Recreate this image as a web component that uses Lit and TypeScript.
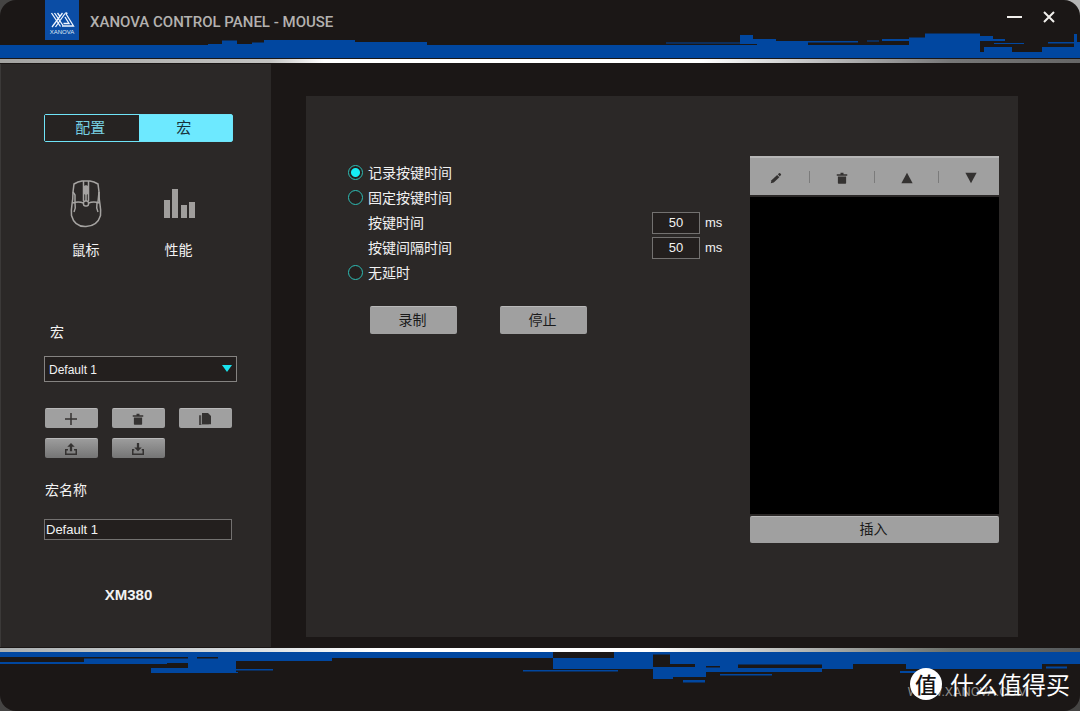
import { LitElement, html, css, svg } from "lit";
import { customElement, state } from "lit/decorators.js";

const trash = svg`<path d="M6 1h4v2h5v2H1V3h5z"/><path d="M2.500 6h11v8.500q0 1-1 1h-9q-1 0-1-1z"/>`;

const icons = {
  plus: svg`<path d="M7 0h2v7h7v2H9v7H7V9H0V7h7z"/>`,
  trash,
  copy: svg`<path d="M4 0h8l4 4v11H4z"/><path d="M0 3h3v12.500h10V16H0z" opacity=".8"/>`,
  upload: svg`<path d="M8 0l5 5H9.500v6h-3V5H3z"/><path d="M0 8h4v2H2v4h12v-4h-2V8h4v8H0z"/>`,
  download: svg`<path d="M6.500 0h3v6H13l-5 5-5-5h3.500z"/><path d="M0 8h3v2H2v4h12v-4h-1V8h3v8H0z"/>`,
  pencil: svg`<path d="M1 15l1-4 7.500-7 3 3L5 14z"/><path d="M10.500 3L12 1.500q.7-.6 1.400 0l1.200 1.200q.6.7 0 1.400L13 6z"/>`,
  up: svg`<path d="M8 1l7.500 14H.5z"/>`,
  down: svg`<path d="M8 15L.5 1h15z"/>`,
};

type IconName = keyof typeof icons;

const icon = (name: IconName) =>
  html`<svg class="icon" viewBox="0 0 16 16" aria-hidden="true">${icons[name]}</svg>`;

@customElement("app-root")
export class AppRoot extends LitElement {
  @state() private mode = "record";

  static styles = css`
    :host {
      display: block;
      min-height: 100vh;
      background: linear-gradient(to top right, #454443 70%, #b4b4b4 95%);
      color: #f2f2f2;
      font: 14px/20px "Liberation Sans", "Noto Sans CJK SC", sans-serif;
    }
    * { box-sizing: border-box; }
    button, input, select { font: inherit; color: inherit; margin: 0; }
    .window {
      display: flex;
      flex-direction: column;
      min-height: 100vh;
      background: #1b1716;
      border-radius: 16px;
      overflow: hidden;
    }
    .header {
      position: relative;
      display: flex;
      align-items: flex-start;
      height: 59px;
      padding: 0 20px 0 45px;
    }
    .deco { position: absolute; left: 0; width: 100%; fill: #0147a0; }
    .deco-top { bottom: 1px; height: 26px; }
    .deco-bottom { top: 0; height: 32px; }
    .logo { width: 34px; height: 40px; background: #0b4da5; flex: none; position: relative; }
    .logo svg { display: block; width: 34px; height: 28px; }
    .brand { font: 6px/8px "Liberation Sans", sans-serif; text-align: center; color: #dfe9f5; }
    .title {
      position: relative;
      flex: 1;
      margin: 0 0 0 11px;
      font: 500 15px/20px Roboto, sans-serif;
      color: #b3b1af;
      padding-top: 12px;
    }
    .controls { position: relative; display: flex; gap: 15px; padding-top: 7px; }
    .control { border: 0; background: none; padding: 0; width: 20px; height: 20px; }
    .control svg { display: block; width: 20px; height: 20px; stroke: #f1efec; fill: none; stroke-width: 2; }
    .rule { height: 4px; flex: none; }
    .rule-top { background: linear-gradient(to right, #a3a3a1, #c4c4c2 25%, #fff 30%, #fff 65%, #777 88%, #666); }
    .rule-bottom { background: linear-gradient(to right, #a9aeb0, #dfe3e5 25%, #fff 35%, #fff 60%, #6c716c 88%, #55595c); }
    .main { flex: 1; display: flex; padding-top: 1px; }
    .sidebar {
      width: 271px;
      flex: none;
      background: #2b2827;
      border-left: 1px solid #3b3938;
      padding: 50px 34px 0 43px;
      margin-bottom: 1px;
    }
    .tabs { display: flex; width: 189px; height: 28px; border: 1px solid #6fe4f8; border-radius: 2px; }
    .tab { flex: 1; padding: 0 3px 0 0; border: 0; background: #262322; color: #76cfe2; font-size: 15px; }
    .tab-active { background: #6de9ff; color: #16333a; }
    .nav { display: grid; grid-template-columns: 93px 93px; margin: 37px 0 0 -5px; }
    .nav-item {
      display: flex;
      flex-direction: column;
      align-items: center;
      gap: 9px;
      padding: 0;
      border: 0;
      background: none;
    }
    .nav-item svg { width: 36px; height: 52px; display: block; }
    .field-label { display: block; }
    .macro-label { margin: 62px 0 14px 6px; }
    .select-wrap { position: relative; width: 193px; }
    .select {
      display: block;
      appearance: none;
      width: 100%;
      height: 26px;
      padding: 2px 4px 0;
      background: #231f1e;
      border: 1px solid #858381;
      border-radius: 0;
      font-size: 12px;
    }
    .arrow { position: absolute; right: 5px; top: 9px; width: 10px; height: 7px; fill: #19e3ee; pointer-events: none; }
    .actions { display: grid; grid-template-columns: repeat(3, 53px); gap: 10px 14px; margin: 26px 0 22px 1px; }
    .btn {
      display: flex;
      align-items: center;
      justify-content: center;
      padding: 0 2px 2px 0;
      border: 0;
      border-top: 1px solid #b9b9b9;
      border-radius: 2px;
      background: #a0a0a0;
      color: #1a1a1a;
    }
    .small { height: 20px; padding: 0 2px 0 0; }
    .shaded { background: linear-gradient(#9c9c9c, #757575); }
    .icon { width: 12px; height: 12px; fill: #343231; display: block; }
    .name-label { margin: 0 0 19px 1px; }
    .name {
      display: block;
      width: 188px;
      height: 21px;
      padding: 0 1px;
      background: #231f1e;
      border: 1px solid #737170;
      font-size: 13px;
    }
    .model { margin: 45px 24px 0 0; text-align: center; font-size: 15px; font-weight: 700; }
    .content { flex: 1; min-width: 0; display: flex; padding: 32px 62px 11px 35px; }
    .panel {
      flex: 1;
      display: flex;
      gap: 27px;
      min-width: 0;
      padding: 60px 19px 94px 42px;
      background: #2b2827;
    }
    .settings { flex: 1; min-width: 0; }
    .options { margin: 0; padding: 4px 0 0; border: 0; }
    .row { display: flex; align-items: center; height: 25px; }
    .row label { display: flex; align-items: center; gap: 5px; }
    .sub { padding-left: 20px; }
    .sub label { flex: 1; }
    .radio {
      appearance: none;
      width: 15px;
      height: 15px;
      border: 1px solid #2dbdb5;
      border-radius: 50%;
      background: #25201f;
    }
    .radio:checked { background: radial-gradient(circle, #16edf3 4px, #25201f 5px); }
    .time {
      width: 48px;
      height: 22px;
      padding: 0;
      border: 1px solid #737170;
      background: #231f1e;
      text-align: center;
      font-size: 13px;
    }
    .unit { width: 18px; margin-left: 5px; font-size: 13px; }
    .commands { display: flex; gap: 43px; margin: 21px 0 0 22px; }
    .command { width: 87px; height: 28px; }
    .events { width: 249px; flex: none; display: flex; flex-direction: column; gap: 2px; }
    .toolbar {
      display: grid;
      grid-template-columns: 60px 1fr 1fr 60px;
      height: 39px;
      background: #a0a0a0;
      border-top: 2px solid #b6b6b6;
    }
    .tool {
      display: flex;
      align-items: center;
      justify-content: center;
      padding: 2px 0 0;
      border: 0;
      background: linear-gradient(#7b7b7b, #7b7b7b) right center / 1px 12px no-repeat;
    }
    .tool:first-child { padding-right: 8px; }
    .tool:last-child { background: none; padding-left: 4px; }
    .list { flex: 1; background: #000; }
    .insert { height: 27px; }
    .footer { position: relative; height: 59px; }
    .site {
      position: absolute;
      right: 52px;
      bottom: 9px;
      color: #8b8987;
      font: 13px/20px Roboto, sans-serif;
      text-decoration: none;
    }
    .mark {
      position: absolute;
      right: 10px;
      bottom: 10px;
      display: flex;
      align-items: center;
      gap: 8px;
      color: #fff;
      font: 24px/34px "Noto Sans CJK SC", sans-serif;
      white-space: nowrap;
    }
    .seal {
      width: 32px;
      height: 32px;
      border-radius: 50%;
      background: #fff;
      color: #151313;
      font-size: 22px;
      line-height: 31px;
      font-weight: 500;
      text-align: center;
    }
  `;

  private radio(value: string, text: string) {
    return html`<div class="row">
      <label><input class="radio" type="radio" name="delay" .checked=${this.mode === value}
        @change=${() => (this.mode = value)} />${text}</label>
    </div>`;
  }

  private time(id: string, text: string) {
    return html`<div class="row sub">
      <label for=${id}>${text}</label>
      <input class="time" id=${id} type="text" inputmode="numeric" value="50" />
      <span class="unit">ms</span>
    </div>`;
  }

  private action(name: IconName, label: string, shaded = false) {
    return html`<button class="btn small ${shaded ? "shaded" : ""}" aria-label=${label}>${icon(name)}</button>`;
  }

  private tool(name: IconName, label: string) {
    return html`<button class="tool" aria-label=${label}>${icon(name)}</button>`;
  }

  render() {
    return html`<div class="window">
      <header class="header">
        <svg class="deco deco-top" viewBox="0 32 1080 26" preserveAspectRatio="none" aria-hidden="true">
          <path d="M0 45H208V44H222V40.500H237V44H252V42.500H264V40H355V42H427V45H757V44H740V35H753V39H776V41H808V45H909V41H882V39H909V37.500H925V33.500H980V36H993V39H1005V41H980V52H984V47H1012V52H1042V47H1074V34H1077V42H1080V58H0z"/>
          <path d="M666 42.500h74v1h-74zM808 41h50v1.500h-50zM867 40.500h12v1h-12zM994 43h30v1h-30zM1048 42h26v1.500h-26z"/>
        </svg>
        <div class="logo">
          <svg viewBox="0 0 34 28" fill="none" stroke="#f0f6ff" stroke-width="1.300" aria-hidden="true">
            <path d="M6.500 13L15.500 26.500M9.500 13L18 25.500M12.500 13L15 16.500M17.500 13L7 27M20 13.500L10.500 27"/>
            <path d="M20.500 13L28.500 26H17M20 17l4 6.500h-5.500M22.500 13.500l-2-1"/>
          </svg>
          <div class="brand">XANOVA</div>
        </div>
        <h1 class="title">XANOVA CONTROL PANEL - MOUSE</h1>
        <div class="controls">
          <button class="control" aria-label="Minimize"><svg viewBox="0 0 20 20"><path d="M2 10h15"/></svg></button>
          <button class="control" aria-label="Close"><svg viewBox="0 0 20 20"><path d="M4 5l10 10M14 5L4 15"/></svg></button>
        </div>
      </header>
      <div class="rule rule-top"></div>
      <div class="main">
        <aside class="sidebar">
          <div class="tabs">
            <button class="tab">配置</button>
            <button class="tab tab-active">宏</button>
          </div>
          <nav class="nav">
            <button class="nav-item">
              <svg viewBox="0 0 36 52" fill="none" stroke="#a5a3a1" stroke-width="1.500" aria-hidden="true">
                <path d="M6 5q4-2.500 8-3h8q4 .5 8 3l1 8q0 7 1 12.500t.5 11q-3 10.500-14.500 11t-14.500-11q-.5-5.500.5-11T5 13z"/>
                <path d="M4.500 24q6-2 11 0M31.500 24q-6-2-11 0M15.500 2v20M20.500 2v20M7 24q1 5-1 9M29 24q-1 5 1 9M5 13l2 3v7M31 13l-1 10"/>
                <rect x="16.500" y="7" width="3" height="8" rx="1" fill="#a5a3a1"/>
                <path d="M18 15v7"/>
                <rect x="15.500" y="22" width="5" height="5" rx="2"/>
              </svg>
              鼠标
            </button>
            <button class="nav-item">
              <svg viewBox="0 0 36 52" fill="#a09e9c" aria-hidden="true">
                <path d="M3 21h6v18H3zM11 10h6v29h-6zM20 26h6v13h-6zM28 23h6v16h-6z"/>
              </svg>
              性能
            </button>
          </nav>
          <label class="field-label macro-label" for="macro">宏</label>
          <div class="select-wrap">
            <select class="select" id="macro"><option>Default 1</option></select>
            <svg class="arrow" viewBox="0 0 10 7" aria-hidden="true"><path d="M0 0h10L5 7z"/></svg>
          </div>
          <div class="actions">
            ${this.action("plus", "新建")} ${this.action("trash", "删除")} ${this.action("copy", "复制")}
            ${this.action("upload", "导出", true)} ${this.action("download", "导入", true)}
          </div>
          <label class="field-label name-label" for="name">宏名称</label>
          <input class="name" id="name" type="text" value="Default 1" />
          <div class="model">XM380</div>
        </aside>
        <main class="content">
          <section class="panel">
            <div class="settings">
              <fieldset class="options" aria-label="延时">
                ${this.radio("record", "记录按键时间")}
                ${this.radio("fixed", "固定按键时间")}
                ${this.time("press", "按键时间")}
                ${this.time("interval", "按键间隔时间")}
                ${this.radio("none", "无延时")}
              </fieldset>
              <div class="commands">
                <button class="btn command">录制</button>
                <button class="btn command">停止</button>
              </div>
            </div>
            <div class="events">
              <div class="toolbar">
                ${this.tool("pencil", "编辑")} ${this.tool("trash", "删除")}
                ${this.tool("up", "上移")} ${this.tool("down", "下移")}
              </div>
              <div class="list"></div>
              <button class="btn insert">插入</button>
            </div>
          </section>
        </main>
      </div>
      <div class="rule rule-bottom"></div>
      <footer class="footer">
        <svg class="deco deco-bottom" viewBox="0 0 1080 32" preserveAspectRatio="none" aria-hidden="true">
          <path d="M0 0H553V6H332V9H236V17H273V18.500H236V20H238V21H151V16H188V12H0V10H84V5H0z"/>
          <path d="M553 6H614V0H1080V12H1042V17H906V12H853V17H822V20H706V25H673V27H653V17H553zM523 18h95v1.500h-95zM683 28h22v2.500h-22zM720 22h52v1.500h-52zM900 19h20v2h-20zM1046 14.500h21v2h-21z"/>
          <path fill="#1b1716" d="M84 5h104v1.500H84zM197 5h21v1.500h-21zM167 11h21v5h-21zM653 2.500h17V12h25v3h-42zM706 14h14v1.500h-14zM738 12.500h84V16h-84z"/>
        </svg>
        <a class="site" href="#">WWW.XANOVA.COM</a>
        <div class="mark"><span class="seal">值</span><span>什么值得买</span></div>
      </footer>
    </div>`;
  }
}
